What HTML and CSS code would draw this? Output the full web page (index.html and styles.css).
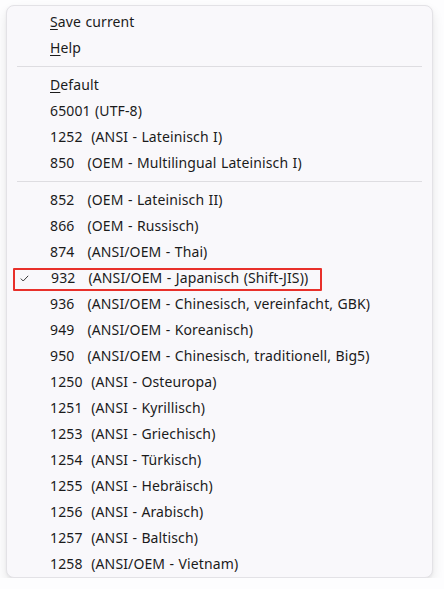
FILE: index.html
```html
<!DOCTYPE html>
<html lang="de">
<head>
<meta charset="utf-8">
<title>Kodierung</title>
<link rel="stylesheet" href="styles.css">
</head>
<body>
<div class="menu" role="menu">
  <div class="item"><span class="label"><u>S</u>ave current</span></div>
  <div class="item"><span class="label"><u>H</u>elp</span></div>
  <div class="sep"></div>
  <div class="item"><span class="label"><u>D</u>efault</span></div>
  <div class="item"><span class="label">65001 (UTF-8)</span></div>
  <div class="item"><span class="label">1252  (ANSI - Lateinisch I)</span></div>
  <div class="item"><span class="label">850   (OEM - Multilingual Lateinisch I)</span></div>
  <div class="sep"></div>
  <div class="item"><span class="label">852   (OEM - Lateinisch II)</span></div>
  <div class="item"><span class="label">866   (OEM - Russisch)</span></div>
  <div class="item"><span class="label">874   (ANSI/OEM - Thai)</span></div>
  <div class="item checked">
    <svg class="check" width="9" height="7" viewBox="0 0 9 7"><path d="M0.8 3.6 L3.2 6 L8.2 0.8" fill="none" stroke="#3a3a3a" stroke-width="1"/></svg>
    <span class="label">932   (ANSI/OEM - Japanisch (Shift-JIS))</span>
    <span class="mark"></span>
  </div>
  <div class="item"><span class="label">936   (ANSI/OEM - Chinesisch, vereinfacht, GBK)</span></div>
  <div class="item"><span class="label">949   (ANSI/OEM - Koreanisch)</span></div>
  <div class="item"><span class="label">950   (ANSI/OEM - Chinesisch, traditionell, Big5)</span></div>
  <div class="item"><span class="label">1250  (ANSI - Osteuropa)</span></div>
  <div class="item"><span class="label">1251  (ANSI - Kyrillisch)</span></div>
  <div class="item"><span class="label">1253  (ANSI - Griechisch)</span></div>
  <div class="item"><span class="label">1254  (ANSI - Türkisch)</span></div>
  <div class="item"><span class="label">1255  (ANSI - Hebräisch)</span></div>
  <div class="item"><span class="label">1256  (ANSI - Arabisch)</span></div>
  <div class="item"><span class="label">1257  (ANSI - Baltisch)</span></div>
  <div class="item"><span class="label">1258  (ANSI/OEM - Vietnam)</span></div>
</div>
</body>
</html>
```
FILE: styles.css
```css
html, body {
  margin: 0;
  background: #fdfdfe;
}

body {
  padding: 5px 0 0 6px;
  font-family: "Noto Sans", "Open Sans", sans-serif;
  font-size: 14px;
  letter-spacing: 0.12px;
  word-spacing: 0.6px;
  color: #1b1b1b;
}

.menu {
  box-sizing: border-box;
  width: 427px;
  padding: 3px 0 0;
  background: #f9f8fb;
  border: 1px solid #e3e2e6;
  border-radius: 8px;
  box-shadow: 0 6px 12px rgba(0, 0, 0, 0.09), 0 1px 3px rgba(0, 0, 0, 0.05);
}

.item {
  position: relative;
  display: flex;
  align-items: center;
  height: 26px;
  padding-left: 43px;
  line-height: 26px;
}

.label {
  white-space: pre;
}

.label u {
  text-decoration-thickness: 1px;
  text-underline-offset: 2px;
}

.sep {
  height: 1px;
  margin: 5px 10px;
  background: #dedde1;
}

.checked {
  padding-left: 0;
}

.check {
  width: 9px;
  height: 7px;
  margin: 0 22px 0 13px;
  flex: none;
}

/* highlight frame drawn over the selected entry */
.mark {
  position: absolute;
  left: 6px;
  top: 3px;
  width: 309px;
  height: 23px;
  box-sizing: border-box;
  border: 2px solid #e8302a;
  border-radius: 1px;
  pointer-events: none;
}
```
